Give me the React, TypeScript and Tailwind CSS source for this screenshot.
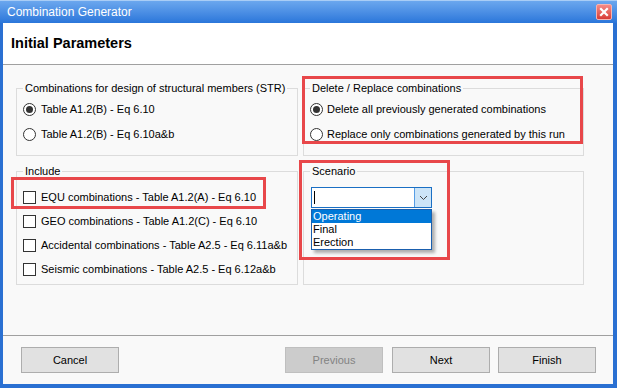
import React from 'react'

// simple radio glyph
function Radio({ checked }: { checked?: boolean }) {
  return (
    <span className="flex h-[13px] w-[13px] shrink-0 items-center justify-center rounded-full border border-[#333333] bg-white">
      {checked && <span className="h-[7px] w-[7px] rounded-full bg-[#333333]" />}
    </span>
  )
}

function Check() {
  return <span className="h-[13px] w-[13px] shrink-0 border border-[#333333] bg-white" />
}

function Btn({ label, disabled }: { label: string; disabled?: boolean }) {
  return (
    <button
      className={
        disabled
          ? 'h-[26px] w-[98px] border border-[#bfbfbf] bg-[#cccccc] text-[11px] text-[#838383]'
          : 'h-[26px] w-[98px] border border-[#adadad] bg-[#e1e1e1] text-[11px] text-black'
      }
    >
      {label}
    </button>
  )
}

const includeRows = [
  'EQU combinations - Table A1.2(A) - Eq 6.10',
  'GEO combinations - Table A1.2(C) - Eq 6.10',
  'Accidental combinations - Table A2.5 - Eq 6.11a&b',
  'Seismic combinations - Table A2.5 - Eq 6.12a&b',
]

export default function App() {
  return (
    <div
      className="relative flex h-[388px] w-[617px] flex-col overflow-hidden bg-[#2a70d2] text-black"
      style={{ fontFamily: '"Liberation Sans", Arial, sans-serif' }}
    >
      {/* title bar */}
      <div className="flex h-[23px] shrink-0 items-center justify-between border-t border-[#a9cdf6] bg-gradient-to-b from-[#6ba7ee] to-[#2a76da] pl-[7px] pr-[5px]">
        <span className="text-[12px] text-white">Combination Generator</span>
        <span className="flex h-[16px] w-[16px] items-center justify-center rounded-[2px] border border-[#f6b3b0] bg-gradient-to-b from-[#f58a86] to-[#d83a36]">
          <svg width="10" height="10" viewBox="0 0 10 10">
            <path d="M2 2 L8 8 M8 2 L2 8" stroke="white" strokeWidth="2.2" strokeLinecap="square" />
          </svg>
        </span>
      </div>

      <div className="mb-[4px] ml-[3px] mr-[4px] flex flex-1 flex-col bg-[#f9f9f9]">
        {/* header */}
        <div className="flex h-[42px] shrink-0 items-center border-b border-[#a0a0a0] bg-white pl-[8px]">
          <span className="text-[14.5px] font-bold">Initial Parameters</span>
        </div>

        {/* content */}
        <div className="flex-1 pl-[13px] pt-[16px]">
          <div className="grid grid-cols-[282px_281px] grid-rows-[75px_121px] gap-x-[5px] gap-y-[8px]">
            <fieldset className="border border-[#dcdcdc] px-[6px]">
              <legend className="px-[2px] text-[11px] leading-[14px]">
                Combinations for design of structural members (STR)
              </legend>
              <div className="flex flex-col gap-[5px] pt-[4px] text-[11px]">
                <div className="flex h-[20px] items-center gap-[5px]">
                  <Radio checked />
                  <span>Table A1.2(B) - Eq 6.10</span>
                </div>
                <div className="flex h-[20px] items-center gap-[5px]">
                  <Radio />
                  <span>Table A1.2(B) - Eq 6.10a&amp;b</span>
                </div>
              </div>
            </fieldset>

            <fieldset className="border border-[#dcdcdc] px-[6px]">
              <legend className="px-[2px] text-[11px] leading-[14px]">Delete / Replace combinations</legend>
              <div className="flex flex-col gap-[5px] pt-[4px] text-[11px]">
                <div className="flex h-[20px] items-center gap-[4px]">
                  <Radio checked />
                  <span>Delete all previously generated combinations</span>
                </div>
                <div className="flex h-[20px] items-center gap-[4px]">
                  <Radio />
                  <span>Replace only combinations generated by this run</span>
                </div>
              </div>
            </fieldset>

            <fieldset className="border border-[#dcdcdc] px-[6px]">
              <legend className="px-[2px] text-[11px] leading-[14px]">Include</legend>
              <div className="flex flex-col pt-[7px] text-[11px]">
                {includeRows.map(r => (
                  <div key={r} className="flex h-[24px] items-center gap-[5px]">
                    <Check />
                    <span>{r}</span>
                  </div>
                ))}
              </div>
            </fieldset>

            <fieldset className="border border-[#dcdcdc] px-[6px]">
              <legend className="px-[2px] text-[11px] leading-[14px]">Scenario</legend>
              <div className="relative ml-[1px] mt-[9px] w-[121px]">
                <div className="flex h-[21px] border border-[#1a6fc4] bg-white">
                  <div className="flex flex-1 items-center pl-[2px]">
                    <span className="h-[13px] w-[1px] bg-black" />
                  </div>
                  <div className="flex w-[17px] items-center justify-center border-l border-[#569de5] bg-[#cce4f7]">
                    <svg width="9" height="6" viewBox="0 0 9 6">
                      <path d="M1 1 L4.5 4.5 L8 1" stroke="#444" strokeWidth="1" fill="none" />
                    </svg>
                  </div>
                </div>
                {/* open dropdown list */}
                <div className="absolute left-0 top-[22px] flex w-[121px] flex-col border border-[#1a5fae] bg-white text-[11px] leading-[13px] shadow-[3px_3px_3px_rgba(0,0,0,0.3)]">
                  <span className="bg-[#0078d7] pl-[1px] text-white">Operating</span>
                  <span className="pl-[1px]">Final</span>
                  <span className="pl-[1px]">Erection</span>
                </div>
              </div>
            </fieldset>
          </div>
        </div>

        {/* footer */}
        <div className="flex h-[49px] shrink-0 items-start border-t border-[#a0a0a0] pl-[18px] pt-[11px]">
          <Btn label="Cancel" />
          <div className="ml-auto mr-[17px] flex gap-[8px]">
            <div className="mr-[1px]">
              <Btn label="Previous" disabled />
            </div>
            <Btn label="Next" />
            <Btn label="Finish" />
          </div>
        </div>
      </div>

      {/* red annotation boxes */}
      <div className="pointer-events-none absolute left-[302px] top-[76px] h-[68px] w-[281px] border-[3px] border-[#e8474a]" />
      <div className="pointer-events-none absolute left-[11px] top-[177px] h-[32px] w-[255px] border-[3px] border-[#e8474a]" />
      <div className="pointer-events-none absolute left-[299px] top-[160px] h-[100px] w-[151px] border-[3px] border-[#e8474a]" />
    </div>
  )
}
